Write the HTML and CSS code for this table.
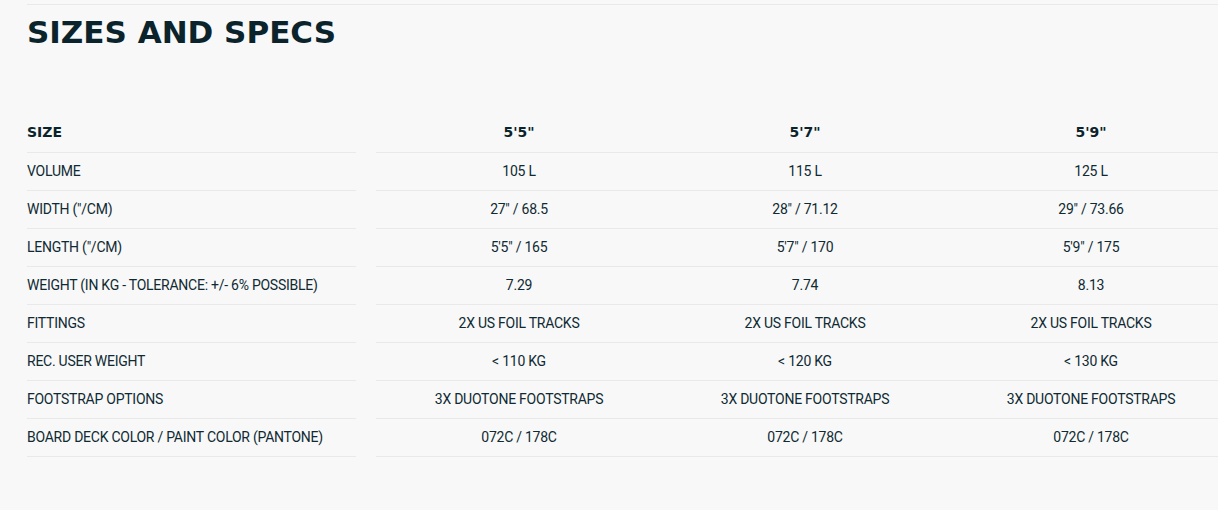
FILE: index.html
```html
<!DOCTYPE html>
<html lang="en">
<head>
<meta charset="utf-8">
<title>Sizes and Specs</title>
<link rel="stylesheet" href="styles.css">
</head>
<body>
<section class="specs">
  <h2 class="title">SIZES AND SPECS</h2>
  <div class="table">
    <div class="row head">
      <div class="label">SIZE</div>
      <div class="cell">5'5"</div>
      <div class="cell">5'7"</div>
      <div class="cell">5'9"</div>
    </div>
    <div class="row">
      <div class="label">VOLUME</div>
      <div class="cell">105 L</div>
      <div class="cell">115 L</div>
      <div class="cell">125 L</div>
    </div>
    <div class="row">
      <div class="label">WIDTH ("/CM)</div>
      <div class="cell">27" / 68.5</div>
      <div class="cell">28" / 71.12</div>
      <div class="cell">29" / 73.66</div>
    </div>
    <div class="row">
      <div class="label">LENGTH ("/CM)</div>
      <div class="cell">5'5" / 165</div>
      <div class="cell">5'7" / 170</div>
      <div class="cell">5'9" / 175</div>
    </div>
    <div class="row">
      <div class="label">WEIGHT (IN KG - TOLERANCE: +/- 6% POSSIBLE)</div>
      <div class="cell">7.29</div>
      <div class="cell">7.74</div>
      <div class="cell">8.13</div>
    </div>
    <div class="row">
      <div class="label">FITTINGS</div>
      <div class="cell">2X US FOIL TRACKS</div>
      <div class="cell">2X US FOIL TRACKS</div>
      <div class="cell">2X US FOIL TRACKS</div>
    </div>
    <div class="row">
      <div class="label">REC. USER WEIGHT</div>
      <div class="cell">&lt; 110 KG</div>
      <div class="cell">&lt; 120 KG</div>
      <div class="cell">&lt; 130 KG</div>
    </div>
    <div class="row">
      <div class="label">FOOTSTRAP OPTIONS</div>
      <div class="cell">3X DUOTONE FOOTSTRAPS</div>
      <div class="cell">3X DUOTONE FOOTSTRAPS</div>
      <div class="cell">3X DUOTONE FOOTSTRAPS</div>
    </div>
    <div class="row">
      <div class="label">BOARD DECK COLOR / PAINT COLOR (PANTONE)</div>
      <div class="cell">072C / 178C</div>
      <div class="cell">072C / 178C</div>
      <div class="cell">072C / 178C</div>
    </div>
  </div>
</section>
</body>
</html>
```

FILE: styles.css
```css
html, body {
  margin: 0;
  padding: 0;
  background: #f8f8f8;
  overflow: hidden;
}

body {
  font-family: Roboto, "Liberation Sans", sans-serif;
  color: #0f2a33;
}

.specs {
  margin: 4px 0 0 27px;
  width: 1207px;
  border-top: 1px solid #e9e9e9;
}

.title {
  margin: 9px 0 0 0;
  font-family: "DejaVu Sans", sans-serif;
  font-weight: 700;
  font-size: 31px;
  line-height: 36px;
  color: #0b232b;
  letter-spacing: 0;
}

.table {
  margin-top: 65px;
}

.row {
  display: grid;
  grid-template-columns: 349px 286px 286px 286px;
  height: 38px;
  font-size: 14px;
  letter-spacing: -0.25px;
}

.label {
  margin-right: 20px;
  display: flex;
  align-items: center;
  padding-bottom: 2px;
  box-sizing: border-box;
  border-bottom: 1px solid #e9e9e9;
}

.cell {
  display: flex;
  align-items: center;
  justify-content: center;
  padding-bottom: 2px;
  box-sizing: border-box;
  border-bottom: 1px solid #e9e9e9;
}

.head {
  font-family: "DejaVu Sans", sans-serif;
  font-weight: 700;
  font-size: 14px;
  letter-spacing: 0;
  color: #0b232b;
}

.head .label,
.head .cell {
  padding-bottom: 3px;
}
```
